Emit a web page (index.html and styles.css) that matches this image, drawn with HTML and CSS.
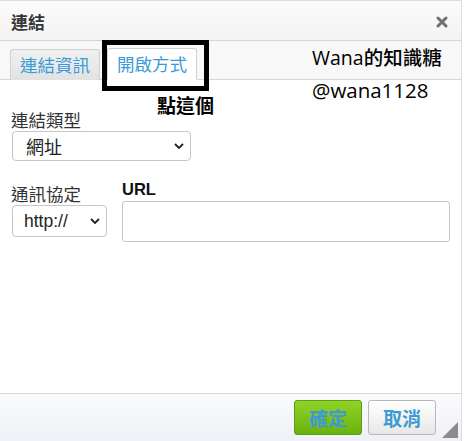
FILE: index.html
```html
<!DOCTYPE html>
<html lang="zh-Hant">
<head>
<meta charset="utf-8">
<title>連結</title>
<link rel="stylesheet" href="styles.css">
</head>
<body>
<div class="dialog">
  <div class="titlebar">
    <span class="title">連結</span>
    <svg class="close" viewBox="0 0 12 12" width="12" height="12"><path d="M2 2 L10 10 M10 2 L2 10" stroke="#707070" stroke-width="3" stroke-linecap="round"/></svg>
  </div>
  <div class="tabs">
    <div class="tab">連結資訊</div>
    <div class="tab active">開啟方式</div>
  </div>
  <div class="content">
    <div class="field">
      <label class="label">連結類型</label>
      <div class="select sel-type"><span>網址</span><svg class="chev" viewBox="0 0 10 6" width="10" height="6"><path d="M1 1 L5 5 L9 1" fill="none" stroke="#222" stroke-width="1.8"/></svg></div>
    </div>
    <div class="row">
      <div class="field">
        <label class="label">通訊協定</label>
        <div class="select sel-proto"><span>http://</span><svg class="chev" viewBox="0 0 10 6" width="10" height="6"><path d="M1 1 L5 5 L9 1" fill="none" stroke="#222" stroke-width="1.8"/></svg></div>
      </div>
      <div class="field url-field">
        <label class="label url-label">URL</label>
        <div class="input"></div>
      </div>
    </div>
  </div>
  <div class="footer">
    <button class="btn ok">確定</button>
    <button class="btn cancel">取消</button>
    <span class="resize"></span>
  </div>
  <div class="mark"></div>
  <div class="credit">
    <div class="credit-name">Wana的知識糖</div>
    <div class="credit-handle">@wana1128</div>
  </div>
  <div class="hint">點這個</div>
</div>
</body>
</html>
```

FILE: styles.css
```css
html, body {
  margin: 0;
  padding: 0;
  background: #fff;
}
body {
  font-family: "Noto Sans CJK TC", "Noto Sans", sans-serif;
  width: 465px;
  height: 441px;
  overflow: hidden;
}
.dialog {
  position: relative;
  width: 461px;
  height: 440px;
  border-top: 1px solid #dcdcdc;
  border-right: 1px solid #dcdcdc;
  display: flex;
  flex-direction: column;
  background: #fff;
}
.titlebar {
  height: 40px;
  flex: none;
  box-sizing: border-box;
  border-bottom: 1px solid #d6d6d6;
  background: linear-gradient(#fbfbfb, #f3f3f3);
  display: flex;
  align-items: center;
  justify-content: space-between;
  padding: 0 13px 0 11px;
}
.title {
  font-size: 17px;
  font-weight: 700;
  color: #363636;
  line-height: 20px;
  margin-top: 2px;
}
.close {
  display: block;
  margin-top: 2px;
}
.tabs {
  height: 39px;
  flex: none;
  box-sizing: border-box;
  border-bottom: 1px solid #d6d6d6;
  background: #f8f8f8;
  display: flex;
  align-items: flex-end;
  gap: 7px;
  padding-left: 10px;
}
.tab {
  width: 90px;
  height: 31px;
  box-sizing: border-box;
  border: 1px solid #d1d1d1;
  border-bottom: none;
  border-radius: 3px 3px 0 0;
  background: linear-gradient(#f0f0f0, #e2e2e2);
  color: #3a9ad9;
  font-size: 17.5px;
  line-height: 30px;
  text-align: center;
  margin-bottom: -1px;
}
.tab.active {
  background: #fff;
  height: 32px;
  border-bottom: 1px solid #fff;
}
.content {
  flex: 1;
  padding: 29px 0 0 11px;
}
.field {
  display: flex;
  flex-direction: column;
}
.label {
  font-size: 17.5px;
  line-height: 22px;
  color: #333;
}
.select {
  box-sizing: border-box;
  border: 1px solid #c6c6c6;
  border-radius: 4px;
  background: #fff;
  display: flex;
  align-items: center;
  justify-content: space-between;
  font-size: 18px;
  color: #222;
}
.sel-type {
  width: 179px;
  height: 30px;
  margin-left: 1px;
  padding: 0 6px 0 13px;
}
.sel-proto {
  width: 95px;
  height: 32px;
  margin-left: 1px;
  padding: 0 6px 0 11px;
  font-family: "Liberation Sans", Arial, sans-serif;
  font-size: 17.5px;
}
.row {
  display: flex;
  gap: 15px;
  margin-top: 19px;
  align-items: flex-end;
}
.url-label {
  font-family: "Liberation Sans", Arial, sans-serif;
  font-weight: 700;
  font-size: 16.5px;
  line-height: 18px;
  margin-bottom: 3px;
  color: #111;
}
.input {
  width: 328px;
  height: 41px;
  box-sizing: border-box;
  border: 1px solid #c6c6c6;
  border-radius: 3px;
  background: #fff;
  margin-bottom: -5px;
}
.footer {
  position: relative;
  height: 48px;
  flex: none;
  box-sizing: border-box;
  border-top: 1px solid #d6d6d6;
  background: linear-gradient(#fafbfd, #eff1f7);
  display: flex;
  justify-content: flex-end;
  align-items: center;
  gap: 6px;
  padding: 0 25px 0 0;
}
.btn {
  width: 68px;
  height: 35px;
  box-sizing: border-box;
  border-radius: 3px;
  font-family: "Noto Sans CJK TC", sans-serif;
  font-size: 19px;
  font-weight: 700;
  color: #3d9ad3;
  padding: 0;
  line-height: 33px;
}
.ok {
  background: linear-gradient(#8fd22a, #6cb20e);
  border: 1px solid #5e9d12;
}
.cancel {
  background: linear-gradient(#ffffff, #e7e7e7);
  border: 1px solid #b8b8b8;
}
.resize {
  position: absolute;
  right: 3px;
  bottom: 3px;
  width: 0;
  height: 0;
  border-left: 16px solid transparent;
  border-bottom: 16px solid #8b8b8b;
}
.mark {
  position: absolute;
  left: 102px;
  top: 39px;
  width: 107px;
  height: 51px;
  box-sizing: border-box;
  border: 5px solid #000;
}
.credit {
  position: absolute;
  left: 312px;
  top: 43px;
  font-family: "Open Sans", "Noto Sans CJK TC", sans-serif;
  color: #000;
}
.credit-name {
  font-size: 19.5px;
  line-height: 28px;
  font-weight: 500;
}
.credit-handle {
  font-size: 20.5px;
  line-height: 28px;
  margin-top: 4px;
  font-weight: 500;
}
.hint {
  position: absolute;
  left: 157px;
  top: 91px;
  font-size: 19px;
  font-weight: 700;
  line-height: 26px;
  color: #000;
}
```
